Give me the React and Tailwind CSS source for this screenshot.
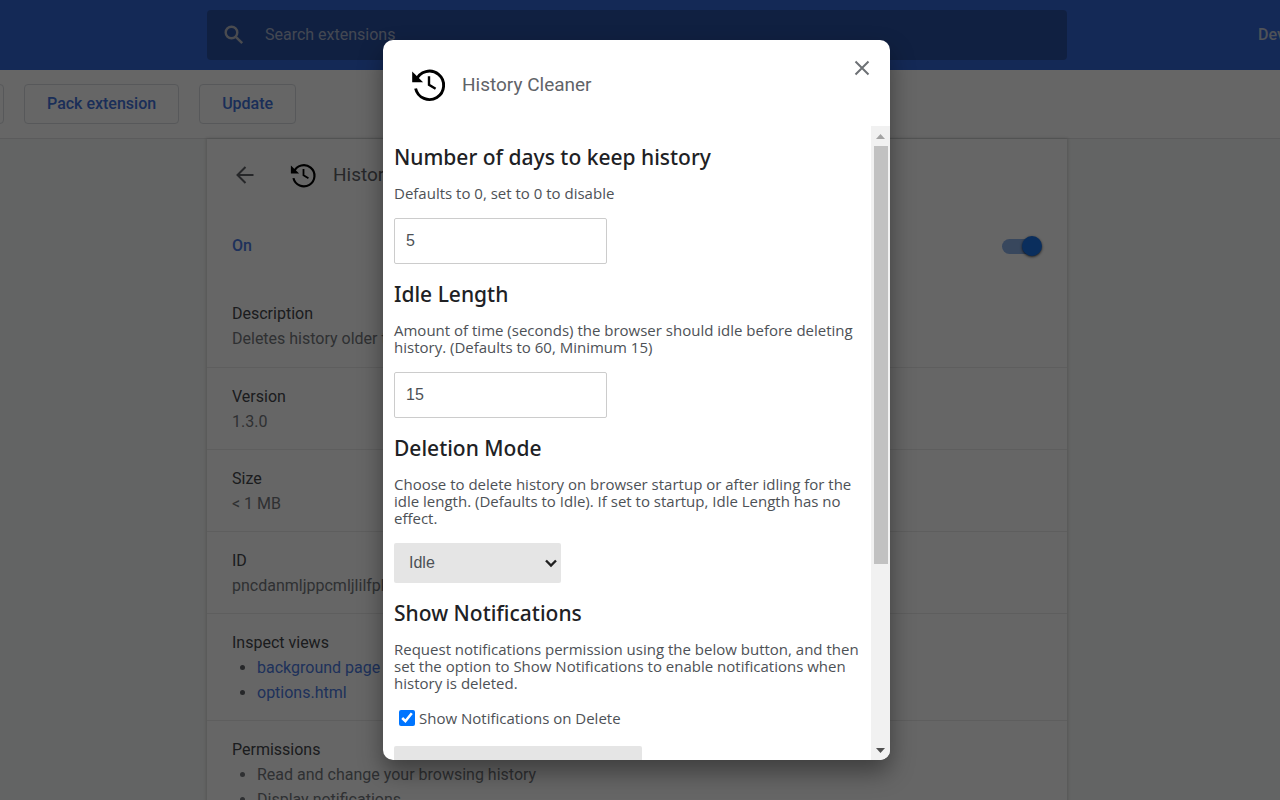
import { useState } from 'react';

const sections = [
  { title: 'Version', text: '1.3.0' },
  { title: 'Size', text: '< 1 MB' },
  { title: 'ID', text: 'pncdanmljppcmljlilfpkbnoaiejmgic' },
];

function HistoryIcon({ className }) {
  return (
    <svg className={className} viewBox="0 0 36 36" fill="none" stroke="#000" aria-hidden="true">
      <path d="M5.2 13.2A14.2 14.2 0 1 1 4.6 21.5" strokeWidth="2.9" />
      <path d="M1.2 4.5v10.8h10.9z" fill="#000" stroke="none" />
      <path d="M18 9.2v8.6l6.6 4" strokeWidth="2.4" />
    </svg>
  );
}

function Section({ title, children }) {
  return (
    <div className="border-t border-[#ebebeb] px-[25px] pt-4 pb-[15px] text-base leading-[25px] text-[#75797e]">
      <div className="text-[#45484c]">{title}</div>
      {children}
    </div>
  );
}

function Option({ title, children }) {
  return (
    <>
      <h2 className="font-['Noto_Sans',sans-serif] text-[21px] leading-6 font-medium text-[#202124]">{title}</h2>
      <p className="mt-4 text-[15px] leading-[17px] whitespace-nowrap">{children}</p>
    </>
  );
}

function NumberInput({ label, value, onChange }) {
  return (
    <input
      aria-label={label}
      value={value}
      onChange={(e) => onChange(e.target.value)}
      className="mt-4 mb-[18px] block h-[46px] w-[213px] rounded-xs border border-[#cccccc] px-[11px] font-['Liberation_Sans',sans-serif] text-base"
    />
  );
}

function ExtensionsPage() {
  return (
    <div className="h-screen overflow-hidden bg-[#f8faf9] text-base">
      <header className="flex h-[70px] items-center bg-[#3367d6] pr-1.5">
        <div className="flex-1" />
        <label className="flex h-[50px] w-[860px] shrink-0 items-center rounded bg-[#2a51a4] pl-[17px]">
          <svg className="size-5" viewBox="0 0 20 20" fill="none" stroke="#b8bcc6" strokeWidth="2.4" aria-hidden="true">
            <circle cx="7.5" cy="7.5" r="5.8" />
            <path d="M11.8 11.8 18.2 18.2" />
          </svg>
          <input
            type="search"
            aria-label="Search extensions"
            placeholder="Search extensions"
            className="ml-[21px] flex-1 bg-transparent outline-none placeholder:text-[#a9b4cd]"
          />
        </label>
        <div className="w-0 flex-1 font-medium whitespace-nowrap text-[#c5ccdb]">
          <span className="ml-[191px]">Developer mode</span>
        </div>
      </header>

      <div className="flex h-[69px] items-center gap-5 border-b border-[#e3e4e5] bg-white font-medium text-[#4273dd]">
        <button className="-ml-[156px] h-10 w-40 shrink-0 rounded border border-[#dadce0]">Load unpacked</button>
        <button className="h-10 rounded border border-[#dadce0] px-[22px]">Pack extension</button>
        <button className="h-10 rounded border border-[#dadce0] px-[22px]">Update</button>
      </div>

      <div className="pr-1.5">
        <main className="mx-auto w-[860px] bg-white shadow-[0_0_3px_1px_rgba(0,0,0,0.15)]">
          <div className="flex h-[72px] items-center pl-[29px]">
            <button aria-label="Back">
              <svg className="h-[18px] w-[18px]" viewBox="0 0 18 18" fill="none" stroke="#5f6368" strokeWidth="2" aria-hidden="true">
                <path d="M17.5 9H2M9.5 1 1.5 9l8 8" />
              </svg>
            </button>
            <HistoryIcon className="ml-9 size-[27px]" />
            <h1 className="ml-4 text-[19px] text-[#5f6368]">History Cleaner</h1>
          </div>
          <div className="flex h-[70px] items-center justify-between px-[25px] font-medium text-[#4d7be3]">
            <label htmlFor="enabled">On</label>
            <div className="relative flex h-5 w-10 items-center">
              <input id="enabled" type="checkbox" defaultChecked className="absolute inset-0 z-10 opacity-0" />
              <span className="h-[15px] w-9 rounded-full bg-[#8cb1e8]" />
              <span className="absolute right-0 size-5 rounded-full bg-[#1a73e8] shadow-sm shadow-black/60" />
            </div>
          </div>
          <div className="mt-1 px-[25px] py-4 leading-[25px] text-[#75797e]">
            <div className="text-[#45484c]">Description</div>
            Deletes history older than a specified amount of days.
          </div>
          {sections.map((section) => (
            <Section key={section.title} title={section.title}>{section.text}</Section>
          ))}
          <Section title="Inspect views">
            <ul className="list-disc pl-[25px] text-[#4d7be3] marker:text-[#5f6368]">
              <li><a href="#background">background page (Inactive)</a></li>
              <li><a href="#options">options.html</a></li>
            </ul>
          </Section>
          <Section title="Permissions">
            <ul className="list-disc pl-[25px]">
              <li>Read and change your browsing history</li>
              <li>Display notifications</li>
            </ul>
          </Section>
        </main>
      </div>
    </div>
  );
}

export default function App() {
  const [days, setDays] = useState('5');
  const [idleLength, setIdleLength] = useState('15');
  const [mode, setMode] = useState('idle');
  const [notify, setNotify] = useState(true);

  return (
    <div className="relative font-[Roboto,sans-serif]">
      <ExtensionsPage />

      <div className="absolute inset-0 flex items-center justify-center bg-black/60 pr-[7px]">
        <div
          role="dialog"
          aria-labelledby="dialog-title"
          className="flex h-[90%] w-[507px] flex-col overflow-hidden rounded-[10px] bg-white shadow-[0_12px_24px_rgba(0,0,0,0.4)]"
        >
          <div className="flex h-[86px] shrink-0 items-start pr-5 pl-7">
            <HistoryIcon className="mt-[27px] size-9" />
            <h1 id="dialog-title" className="mt-[33px] ml-[15px] flex-1 text-[19px] leading-6 text-[#5f6368]">History Cleaner</h1>
            <button aria-label="Close" className="mt-5">
              <svg className="size-4" viewBox="0 0 16 16" stroke="#6d7175" strokeWidth="2" aria-hidden="true">
                <path d="M1.5 1.5l13 13M14.5 1.5l-13 13" />
              </svg>
            </button>
          </div>

          <div className="flex min-h-0 flex-1">
            <div className="min-w-0 flex-1 overflow-hidden pt-[19px] pl-[11px] font-['Open_Sans',sans-serif] text-[#4d5156]">
              <Option title="Number of days to keep history">Defaults to 0, set to 0 to disable</Option>
              <NumberInput label="Number of days to keep history" value={days} onChange={setDays} />

              <Option title="Idle Length">
                Amount of time (seconds) the browser should idle before deleting<br />
                history. (Defaults to 60, Minimum 15)
              </Option>
              <NumberInput label="Idle Length" value={idleLength} onChange={setIdleLength} />

              <Option title="Deletion Mode">
                Choose to delete history on browser startup or after idling for the<br />
                idle length. (Defaults to Idle). If set to startup, Idle Length has no<br />
                effect.
              </Option>
              <div className="relative mt-4 mb-[18px] w-[167px]">
                <select
                  aria-label="Deletion Mode"
                  value={mode}
                  onChange={(e) => setMode(e.target.value)}
                  className="block h-10 w-full appearance-none rounded-xs bg-[#e5e5e5] px-[15px] font-['Liberation_Sans',sans-serif] text-base"
                >
                  <option value="idle">Idle</option>
                  <option value="startup">Startup</option>
                </select>
                <svg className="pointer-events-none absolute top-4 right-1 h-[9px] w-3" viewBox="0 0 12 9" fill="none" stroke="#202020" strokeWidth="2.4" aria-hidden="true">
                  <path d="M1 1.5l5 5 5-5" />
                </svg>
              </div>

              <Option title="Show Notifications">
                Request notifications permission using the below button, and then<br />
                set the option to Show Notifications to enable notifications when<br />
                history is deleted.
              </Option>
              <label className="mt-4 ml-[5px] flex h-5 items-center gap-1 text-[15px] leading-5">
                <input type="checkbox" checked={notify} onChange={(e) => setNotify(e.target.checked)} className="size-4 accent-[#0075ff]" />
                Show Notifications on Delete
              </label>
              <button aria-label="Request notifications permission" className="mt-[18px] h-10 w-[248px] rounded-xs bg-[#e5e5e5]" />
            </div>

            <div className="flex w-[19px] flex-col items-center bg-[#f1f1f1]" aria-hidden="true">
              <svg className="h-5 w-[9px] shrink-0" viewBox="0 0 9 20" fill="#a3a3a3"><path d="M0 13 4.5 8 9 13z" /></svg>
              <div className="h-[66%] w-[14px] bg-[#c1c1c1]" />
              <div className="flex-1" />
              <svg className="h-5 w-[9px] shrink-0" viewBox="0 0 9 20" fill="#505050"><path d="M0 8 4.5 13 9 8z" /></svg>
            </div>
          </div>
        </div>
      </div>
    </div>
  );
}
